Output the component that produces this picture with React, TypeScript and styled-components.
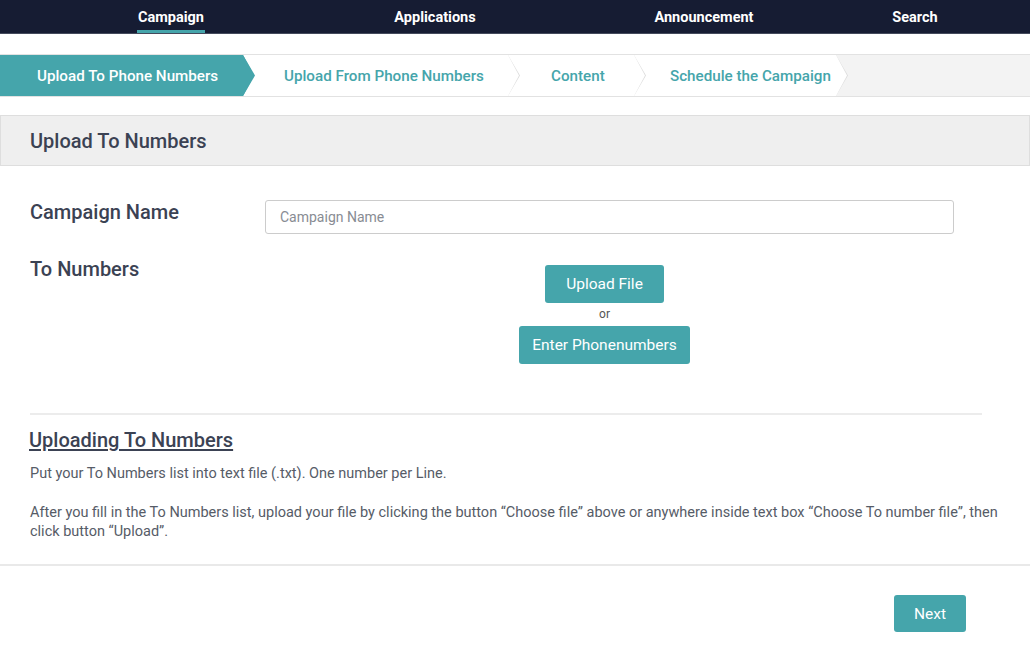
import React from 'react'
import styled, { createGlobalStyle, css } from 'styled-components'

const teal = '#45a5ab'
const ink = '#3b4253'

const Global = createGlobalStyle`
  body {
    margin: 0;
    background: #fff;
    font-family: Roboto, 'Noto Sans', Arial, sans-serif;
  }
  * { box-sizing: border-box; }
`

const steps = [
  { label: 'Upload To Phone Numbers', width: 243, pad: 37, active: true },
  { label: 'Upload From Phone Numbers', width: 265, pad: 41, active: false },
  { label: 'Content', width: 126, pad: 43, active: false },
  { label: 'Schedule the Campaign', width: 202, pad: 36, active: false },
]

const App = () => {
  return (
    <>
      <Global />
      <Page>
        <TopNav>
          <NavCell><NavLink $active>Campaign</NavLink></NavCell>
          <NavCell><NavLink>Applications</NavLink></NavCell>
          <NavCell><NavLink>Announcement</NavLink></NavCell>
          <NavCell><NavLink>Search</NavLink></NavCell>
        </TopNav>

        <Stepper>
          {steps.map((s, i) => (
            <Step key={s.label} $width={s.width} $pad={s.pad} $active={s.active} $z={10 - i}>
              {s.label}
            </Step>
          ))}
        </Stepper>

        <PanelHead>
          <PanelTitle>Upload To Numbers</PanelTitle>
        </PanelHead>

        <Form>
          <Label $shift={2}>Campaign Name</Label>
          <TextInput placeholder="Campaign Name" />
          <Label $shift={-6}>To Numbers</Label>
          <ButtonStack>
            <Button $width={119}>Upload File</Button>
            <Or>or</Or>
            <Button $width={171}>Enter Phonenumbers</Button>
          </ButtonStack>
        </Form>

        <Help>
          <Divider />
          <HelpTitle>Uploading To Numbers</HelpTitle>
          <HelpText>Put your To Numbers list into text file (.txt). One number per Line.</HelpText>
          <HelpText>
            After you fill in the To Numbers list, upload your file by clicking the button “Choose file” above or anywhere inside text box “Choose To number file”, then click button “Upload”.
          </HelpText>
        </Help>

        <Footer>
          <Button $width={72}>Next</Button>
        </Footer>
      </Page>
    </>
  )
}

export default App

const Page = styled.div`
  width: 1030px;
  min-height: 652px;
  background: #fff;
`

const TopNav = styled.nav`
  display: grid;
  grid-template-columns: 262px 266px 272px 150px;
  padding-left: 40px;
  height: 34px;
  background: #161c33;
  border-bottom: 1px solid #444a5c;
`

const NavCell = styled.div`
  display: flex;
  justify-content: center;
`

const NavLink = styled.a<{ $active?: boolean }>`
  display: flex;
  align-items: center;
  height: 33px;
  padding: 4px 1px 0;
  color: #fff;
  font-size: 14.5px;
  font-weight: 700;
  cursor: pointer;
  border-bottom: 3px solid ${(p) => (p.$active ? teal : 'transparent')};
`

const Stepper = styled.div`
  display: flex;
  margin-top: 20px;
  height: 43px;
  background: #f3f3f3;
  border-top: 1px solid #e2e2e2;
  border-bottom: 1px solid #e2e2e2;
`

const Step = styled.div<{ $width: number; $pad: number; $active: boolean; $z: number }>`
  position: relative;
  z-index: ${(p) => p.$z};
  display: flex;
  align-items: center;
  flex: none;
  width: ${(p) => p.$width}px;
  padding-left: ${(p) => p.$pad}px;
  font-size: 15.2px;
  font-weight: 500;
  white-space: nowrap;
  cursor: pointer;

  &::before,
  &::after {
    content: '';
    position: absolute;
    top: 0;
    bottom: 0;
    clip-path: polygon(0 0, 100% 50%, 0 100%);
  }
  &::before {
    right: -12px;
    width: 12px;
    background: #dcdcdc;
  }
  &::after {
    right: -11px;
    width: 11px;
  }

  ${(p) =>
    p.$active
      ? css`
          background: ${teal};
          color: #fff;
          &::before { background: ${teal}; }
          &::after { background: ${teal}; }
        `
      : css`
          background: #fff;
          color: ${teal};
          &::after { background: #fff; }
        `}
`

const PanelHead = styled.div`
  display: flex;
  align-items: center;
  margin-top: 18px;
  height: 51px;
  padding-left: 29px;
  background: #efefef;
  border: 1px solid #dedede;
`

const PanelTitle = styled.h2`
  margin: 0;
  font-size: 20px;
  font-weight: 500;
  color: ${ink};
`

const Form = styled.div`
  display: grid;
  grid-template-columns: 235px 689px;
  row-gap: 31px;
  padding: 34px 0 0 30px;
`

const Label = styled.div<{ $shift: number }>`
  margin-top: ${(p) => p.$shift}px;
  font-size: 20px;
  line-height: 20px;
  font-weight: 500;
  color: ${ink};
`

const TextInput = styled.input`
  height: 34px;
  width: 100%;
  padding: 0 14px;
  border: 1px solid #cccccc;
  border-radius: 3px;
  font-family: inherit;
  font-size: 14px;
  color: #555;
  outline: none;
  &::placeholder { color: #888c93; }
`

const ButtonStack = styled.div`
  display: flex;
  flex-direction: column;
  align-items: center;
  padding-right: 10px;
`

const Button = styled.button<{ $width: number }>`
  width: ${(p) => p.$width}px;
  height: 38px;
  padding: 0;
  background: ${teal};
  border: none;
  border-radius: 3px;
  color: #fff;
  font-family: inherit;
  font-size: 15.5px;
  cursor: pointer;
`

const Or = styled.span`
  height: 23px;
  line-height: 23px;
  font-size: 12px;
  color: #555;
`

const Help = styled.div`
  margin: 49px 18px 0 30px;
`

const Divider = styled.hr`
  margin: 0 30px 13px 0;
  border: none;
  border-top: 2px solid #ececec;
`

const HelpTitle = styled.h3`
  margin: 0 0 12px -1px;
  font-size: 20px;
  line-height: 24px;
  font-weight: 500;
  color: ${ink};
  text-decoration: underline;
  text-underline-offset: 2px;
`

const HelpText = styled.p`
  margin: 0 0 20px;
  font-size: 14.5px;
  line-height: 19px;
  color: #565c67;
`

const Footer = styled.div`
  display: flex;
  justify-content: flex-end;
  margin-top: 23px;
  padding: 29px 64px 0 0;
  border-top: 2px solid #e9e9e9;

  ${Button} {
    height: 37px;
  }
`
